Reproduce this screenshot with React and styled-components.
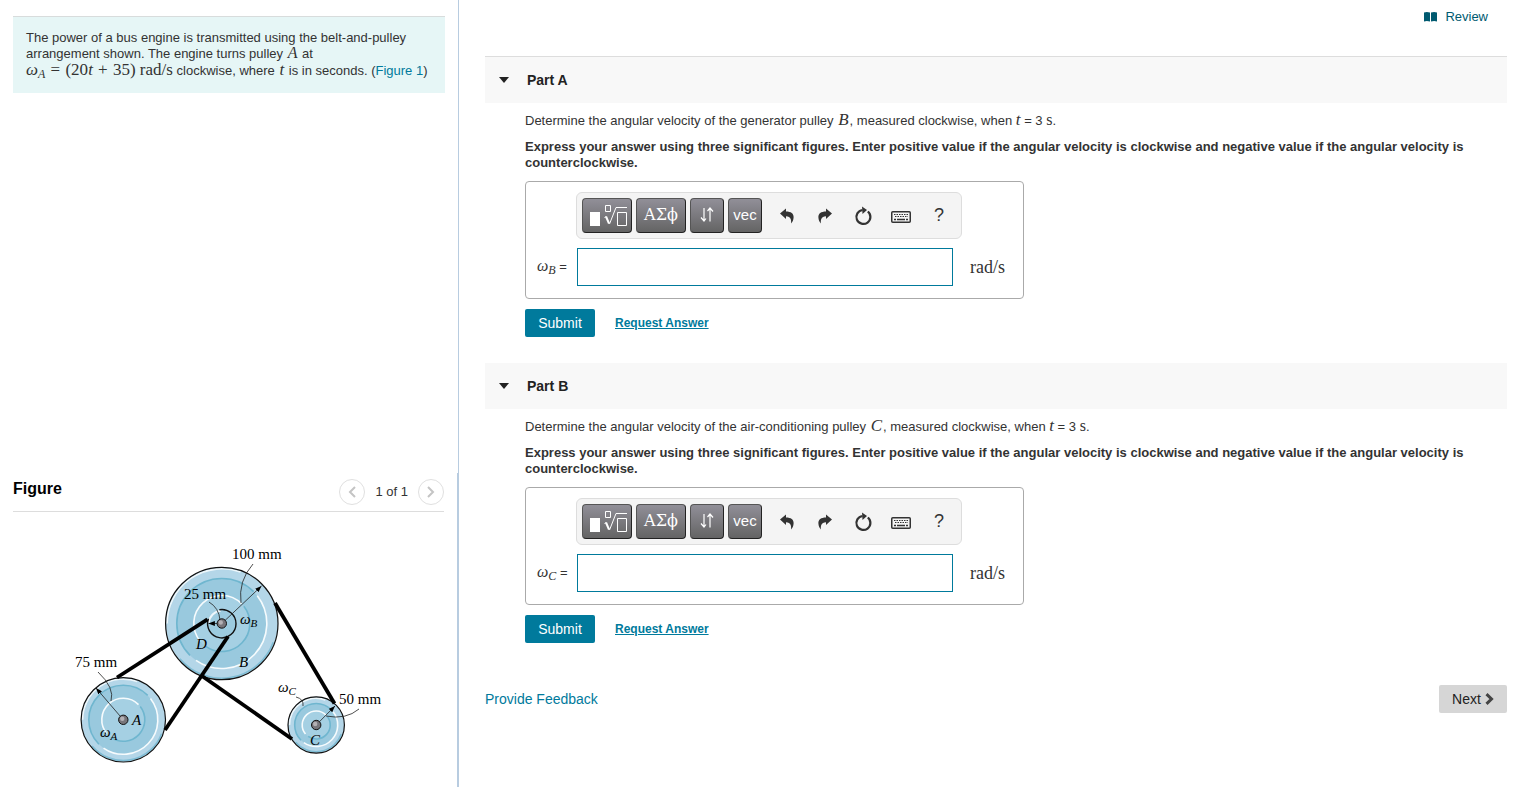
import React, { useState } from 'react'
import styled, { createGlobalStyle } from 'styled-components'

const GlobalStyle = createGlobalStyle`
  * {
    box-sizing: border-box;
  }
  body {
    margin: 0;
    background: #fff;
    color: #333;
    font: 13px/16px 'Liberation Sans', Arial, sans-serif;
  }
  button, input {
    font-family: inherit;
  }
  a {
    color: #007a9c;
    text-decoration: none;
  }
`

const Page = styled.div`
  display: flex;
  min-height: 100vh;
`

const Sidebar = styled.aside`
  display: flex;
  flex-direction: column;
  flex: 0 0 459px;
`

const ProblemPane = styled.section`
  flex: 1;
  padding: 16px 13px 0;
  border-right: 1px solid #b8cce0;
`

const ProblemText = styled.p`
  margin: 0;
  padding: 13px 13px 14px;
  border-top: 1px solid #d8dcdc;
  background: #e6f6f6;
`

const FigurePane = styled.section`
  padding: 6px 13px 7px;
  border-right: 2px solid #b8cce0;
`

const FigureHeader = styled.header`
  display: flex;
  align-items: flex-start;
  justify-content: space-between;
  padding-bottom: 6px;
  border-bottom: 1px solid #ddd;
`

const FigureTitle = styled.h2`
  margin: 0;
  color: #000;
  font-size: 16px;
  line-height: 20px;
`

const Pager = styled.div`
  display: flex;
  align-items: center;
  gap: 10px;
`

const RoundButton = styled.button`
  display: flex;
  align-items: center;
  justify-content: center;
  width: 26px;
  height: 26px;
  padding: 0;
  border: 1px solid #e0e0e0;
  border-radius: 50%;
  background: #fff;
`

const Drawing = styled.svg`
  display: block;
  width: 100%;
  margin-top: 16px;
  font-family: 'Liberation Serif', serif;
`

const Content = styled.main`
  flex: 1;
  min-width: 0;
  padding: 0 19px 0 26px;
`

const TopBar = styled.div`
  display: flex;
  justify-content: flex-end;
  height: 56px;
  padding: 9px 19px 0 0;
`

const ReviewLink = styled.a`
  display: flex;
  align-items: center;
  gap: 8px;
  height: 16px;
  color: #005a70;
`

const PartSection = styled.section`
  margin-bottom: 26px;
`

const PartTitle = styled.h2`
  margin: 0;
  border-top: ${props => props.$first ? '1px solid #ddd' : 'none'};
`

const PartToggle = styled.button`
  display: flex;
  align-items: center;
  gap: 18px;
  width: 100%;
  height: 46px;
  padding: 0 14px;
  border: 0;
  background: #f8f8f8;
  color: #222;
  font-size: 14px;
  font-weight: bold;
`

const PartBody = styled.div`
  padding: 10px 0 0 40px;
`

const Question = styled.p`
  margin: 0 0 10px;
`

const Instructions = styled.p`
  margin: 0 0 10px;
  font-weight: bold;
`

const Formula = styled.span`
  margin: ${props => props.$tight ? 0 : '0 1px'};
  font-family: 'Liberation Serif', 'Times New Roman', serif;
  font-size: ${props => props.$size || 17}px;
  font-weight: normal;
  line-height: ${props => props.$tall ? 15 : 1}px;

  sub {
    font-size: 12px;
    line-height: 1px;
    vertical-align: -3px;
  }
`

const Operator = styled.span`
  margin: 0 1px;
`

const AnswerBox = styled.div`
  display: inline-grid;
  grid-template-columns: 41px 376px auto;
  row-gap: 9px;
  align-items: center;
  width: 499px;
  max-width: 100%;
  padding: 10px 10px 12px;
  border: 1px solid #aaa;
  border-radius: 4px;
  vertical-align: top;
`

const Toolbar = styled.div`
  display: flex;
  grid-column: 2 / 4;
  gap: 4px;
  width: 386px;
  height: 47px;
  padding: 5px;
  margin-left: -1px;
  border: 1px solid #ddd;
  border-radius: 6px;
  background: #f4f4f4;
`

const MathButton = styled.button`
  display: flex;
  align-items: center;
  justify-content: center;
  width: ${props => props.$wide ? 50 : 34}px;
  height: 35px;
  padding: 0 0 2px;
  border: 1px solid #555;
  border-right-color: #222;
  border-bottom-color: #222;
  border-radius: 4px;
  background: linear-gradient(#918f98, #646464);
  color: #fff;
  font-family: ${props => props.$serif ? "'DejaVu Serif', serif" : 'inherit'};
  font-size: ${props => props.$serif ? 16 : 15}px;
`

const IconGroup = styled.div`
  display: flex;
  gap: 4px;
  padding-left: 4px;
`

const IconButton = styled.button`
  display: flex;
  align-items: center;
  justify-content: center;
  width: 34px;
  height: 35px;
  padding: 0;
  border: 0;
  background: none;
  color: #333;
  font-size: 18px;
`

const AnswerLabel = styled.label`
  padding-left: 1px;
  white-space: nowrap;
`

const AnswerInput = styled.input`
  width: 100%;
  height: 38px;
  padding: 0 8px;
  border: 1px solid #007a9c;
  background: #fff;
  font-size: 16px;
  outline: none;
`

const Units = styled(Formula)`
  padding-left: 16px;
`

const Actions = styled.div`
  display: flex;
  align-items: center;
  gap: 20px;
  margin-top: 10px;
`

const SubmitButton = styled.button`
  width: 70px;
  height: 28px;
  padding: 0;
  border: 0;
  border-radius: 2px;
  background: #007a9c;
  color: #fff;
  font-size: 14px;
`

const RequestLink = styled.a`
  font-size: 12px;
  font-weight: bold;
  text-decoration: underline;
`

const Footer = styled.footer`
  display: flex;
  align-items: center;
  justify-content: space-between;
  margin-top: 42px;
  font-size: 14px;
`

const NextButton = styled.button`
  display: flex;
  align-items: center;
  justify-content: center;
  gap: 4px;
  width: 68px;
  height: 28px;
  padding: 0;
  border: 0;
  border-radius: 2px;
  background: #d6d6d6;
  color: #222;
  font-size: 14px;
`

const Chevron = ({ right }) => (
  <svg width="10" height="14" viewBox="0 0 10 14" fill="none" stroke="#c4c4c4" strokeWidth="2">
    <path d={right ? 'M2 2l5 5-5 5' : 'M8 2L3 7l5 5'} />
  </svg>
)

const BookIcon = () => (
  <svg width="13" height="10" viewBox="0 0 13 10" fill="#005a70">
    <path d="M0 .5Q3-.5 6 .6V9.6Q3 8.5 0 9.5zM7 .6Q10-.5 13 .5V9.5Q10 8.5 7 9.6z" />
  </svg>
)

const RootIcon = () => (
  <svg width="40" height="24" viewBox="0 0 40 24" fill="none" stroke="#fff">
    <path d="M3 9h10v14H3z" fill="#fff" stroke="none" />
    <path d="M18.500 2.500h5v6h-5z" />
    <path d="M17.500 14.500l1.500-1" />
    <path d="M19 13.500l3 7" strokeWidth="2" />
    <path d="M22.500 21L29 4.500H40" />
    <path d="M30.500 9.500h9v13h-9z" />
  </svg>
)

const ArrowsIcon = () => (
  <svg width="14" height="15" viewBox="0 0 14 15" fill="none" stroke="#fff" strokeWidth="1.200">
    <path d="M4 1v13M1 10.500l3 3.500 2-2.500M10 14.500V1M7.500 4L10 1l3 3.500" />
  </svg>
)

const UndoIcon = ({ flip }) => (
  <svg width="14" height="16" viewBox="0 0 14 16" fill="#333">
    <path
      transform={flip ? 'matrix(-1 0 0 1 14 0)' : undefined}
      d="M0 5.500L6 .5V3.500C11 3.500 13.800 5.500 13.600 9.500C13.500 12 12.500 14 11 15.500C11.500 12 11 8.800 6 8.300V11z"
    />
  </svg>
)

const ResetIcon = () => (
  <svg width="18" height="20" viewBox="0 0 18 20" fill="none" stroke="#333" strokeWidth="2.200">
    <path d="M13.800 5.500A7 7 0 1 1 8.500 4" />
    <path d="M8 .5L13 4 8.500 8z" fill="#333" stroke="none" />
  </svg>
)

const KeyboardIcon = () => (
  <svg width="20" height="14" viewBox="0 0 20 14" fill="none" stroke="#333">
    <rect x=".75" y="2.750" width="18.500" height="10.500" rx="1" strokeWidth="1.500" />
    <path d="M3 5.500h14M4 7.500h13" strokeWidth="1.200" strokeDasharray="1.500 1" />
    <path d="M3 10.500h2M6 10.500h8M15 10.500h2" strokeWidth="1.500" />
  </svg>
)

const Omega = ({ x, y, sub }) => (
  <text x={x} y={y} fontSize="15" fontStyle="italic">
    ω<tspan fontSize="11" dy="3">{sub}</tspan>
  </text>
)

const Bolt = ({ x, y }) => (
  <g>
    <circle cx={x} cy={y} r="4.700" fill="#77757a" stroke="#111" />
    <circle cx={x - 1} cy={y - 1} r="2.200" fill="#b3b0b4" />
  </g>
)

// arc between two angles, in degrees clockwise from the right
const arc = (x, y, radius, from, to) => {
  const point = deg => {
    const a = deg * Math.PI / 180
    return `${x + radius * Math.cos(a)} ${y + radius * Math.sin(a)}`
  }
  return `M${point(from)}A${radius} ${radius} 0 ${to - from > 180 ? 1 : 0} 1 ${point(to)}`
}

const Wheel = ({ x, y, r, middle, inner }) => (
  <g fill="none" strokeWidth="1.600">
    <circle cx={x} cy={y} r={r} fill="#b4d6e8" />
    <path d={arc(x, y, r - 1.5, 20, 140)} stroke="#7fbdd5" />
    <path d={arc(x, y, r - 1.5, 180, 290)} stroke="#eef7fb" />
    <circle cx={x} cy={y} r={r} stroke="#111" strokeWidth="1.200" />
    <circle cx={x} cy={y} r={middle} fill="#99c9de" />
    <path d={arc(x, y, middle, 135, 315)} stroke="#6fb6cf" />
    <path d={arc(x, y, middle, -38, 125)} stroke="#f6fbfd" />
    <circle cx={x} cy={y} r={inner} fill="#a5d0e3" />
    <path d={arc(x, y, inner, 140, 315)} stroke="#f6fbfd" />
    <path d={arc(x, y, inner, -38, 125)} stroke="#6fb6cf" />
  </g>
)

const PulleyFigure = () => (
  <Drawing viewBox="13 528 431 252" role="img" aria-label="Belt and pulley arrangement">
    <defs>
      <marker id="tip" viewBox="0 0 8 6" refX="8" refY="3" markerWidth="8" markerHeight="6" orient="auto">
        <path d="M0 0L8 3 0 6z" />
      </marker>
    </defs>
    <Wheel x={221.8} y={623.5} r={56.2} middle={45} inner={28} />
    <Wheel x={123.3} y={719.8} r={42.2} middle={34.5} inner={21.5} />
    <Wheel x={316.2} y={725} r={28.2} middle={21.5} inner={14} />
    <circle cx="221.800" cy="623.700" r="14.200" fill="#9ccbdf" />
    <path d={arc(221.8, 623.7, 13, 185, 265)} fill="none" stroke="#eef7fb" strokeWidth="2" />
    <path d={arc(221.8, 623.7, 14.2, -100, 200)} fill="none" stroke="#111" strokeWidth="1.400" />
    <g stroke="#000" strokeWidth="3.800">
      <path d="M207.500 619.300L117 677.500" />
      <path d="M228 636.500L165 730" />
      <path d="M275 603L334.500 703.500" />
      <path d="M202 676L292 739" />
    </g>
    <g fill="none" stroke="#222" strokeWidth=".8">
      <path d="M221.800 623.500L261.500 586" markerEnd="url(#tip)" />
      <path d="M221.800 623.500H208.500" markerEnd="url(#tip)" />
      <path d="M123.300 719.800L96 688" markerEnd="url(#tip)" />
      <path d="M316.200 725L335 706" markerEnd="url(#tip)" />
      <path d="M253 564Q238 581 241 603" />
      <path d="M209 602Q219 608 220 620" />
      <path d="M98 672Q115 688 111 701" />
      <path d="M359 709Q346 720 326 716" />
      <path d="M296 697Q304 699 303 706" />
    </g>
    <Bolt x={221.8} y={623.5} />
    <Bolt x={123.3} y={719.8} />
    <Bolt x={316.2} y={725} />
    <g fontSize="15">
      <text x="232" y="559">100 mm</text>
      <text x="184" y="599">25 mm</text>
      <text x="75" y="667">75 mm</text>
      <text x="339" y="704">50 mm</text>
    </g>
    <g fontSize="15" fontStyle="italic">
      <text x="196" y="649">D</text>
      <text x="239" y="667">B</text>
      <text x="132" y="725">A</text>
      <text x="310" y="745">C</text>
    </g>
    <Omega x={240} y={624} sub="B" />
    <Omega x={100} y={737} sub="A" />
    <Omega x={278} y={692} sub="C" />
  </Drawing>
)

const Part = ({ letter, device, pulley, first }) => {
  const [open, setOpen] = useState(true)
  const [answer, setAnswer] = useState('')
  const inputId = `answer-${letter}`

  return (
    <PartSection>
      <PartTitle $first={first}>
        <PartToggle aria-expanded={open} onClick={() => setOpen(!open)}>
          <svg width="10" height="6" viewBox="0 0 10 6" fill="#222">
            <path d={open ? 'M0 0h10L5 6z' : 'M2 0l6 3-6 3z'} />
          </svg>
          Part {letter}
        </PartToggle>
      </PartTitle>
      {open && (
        <PartBody>
          <Question>
            Determine the angular velocity of the {device} pulley <Formula><i>{pulley}</i></Formula>, measured
            clockwise, when <Formula $tight><i>t</i></Formula> = 3 <Formula $tight $size={16}>s</Formula>.
          </Question>
          <Instructions>
            Express your answer using three significant figures. Enter positive value if the angular velocity is
            clockwise and negative value if the angular velocity is counterclockwise.
          </Instructions>
          <AnswerBox>
            <Toolbar role="toolbar" aria-label="Equation tools">
              <MathButton $wide aria-label="Templates"><RootIcon /></MathButton>
              <MathButton $wide $serif>ΑΣϕ</MathButton>
              <MathButton aria-label="Arrows"><ArrowsIcon /></MathButton>
              <MathButton>vec</MathButton>
              <IconGroup>
                <IconButton aria-label="Undo"><UndoIcon /></IconButton>
                <IconButton aria-label="Redo"><UndoIcon flip /></IconButton>
                <IconButton aria-label="Reset"><ResetIcon /></IconButton>
                <IconButton aria-label="Keyboard shortcuts"><KeyboardIcon /></IconButton>
                <IconButton aria-label="Help">?</IconButton>
              </IconGroup>
            </Toolbar>
            <AnswerLabel htmlFor={inputId}>
              <Formula $tight $size={16}><i>ω<sub>{pulley}</sub></i></Formula> =
            </AnswerLabel>
            <AnswerInput id={inputId} value={answer} onChange={e => setAnswer(e.target.value)} />
            <Units $size={18}>rad/s</Units>
          </AnswerBox>
          <Actions>
            <SubmitButton>Submit</SubmitButton>
            <RequestLink href="#request">Request Answer</RequestLink>
          </Actions>
        </PartBody>
      )}
    </PartSection>
  )
}

const App = () => (
  <Page>
    <GlobalStyle />
    <Sidebar>
      <ProblemPane>
        <ProblemText>
          The power of a bus engine is transmitted using the belt-and-pulley arrangement shown. The engine turns
          pulley <Formula $size={16}><i>A</i></Formula> at<br />
          <Formula $tall $tight>
            <i>ω<sub>A</sub></i> <Operator>=</Operator> (20<i>t</i> <Operator>+</Operator> 35) rad/s
          </Formula> clockwise, where <Formula><i>t</i></Formula> is
          in seconds. (<a href="#figure">Figure 1</a>)
        </ProblemText>
      </ProblemPane>
      <FigurePane id="figure">
        <FigureHeader>
          <FigureTitle>Figure</FigureTitle>
          <Pager>
            <RoundButton aria-label="Previous figure"><Chevron /></RoundButton>
            <span>1 of 1</span>
            <RoundButton aria-label="Next figure"><Chevron right /></RoundButton>
          </Pager>
        </FigureHeader>
        <PulleyFigure />
      </FigurePane>
    </Sidebar>
    <Content>
      <TopBar>
        <ReviewLink href="#review"><BookIcon />Review</ReviewLink>
      </TopBar>
      <Part letter="A" device="generator" pulley="B" first />
      <Part letter="B" device="air-conditioning" pulley="C" />
      <Footer>
        <a href="#feedback">Provide Feedback</a>
        <NextButton>
          Next
          <svg width="9" height="12" viewBox="0 0 9 12" fill="none" stroke="#444" strokeWidth="3">
            <path d="M1.500 1.200L6.500 6l-5 4.800" />
          </svg>
        </NextButton>
      </Footer>
    </Content>
  </Page>
)

export default App
